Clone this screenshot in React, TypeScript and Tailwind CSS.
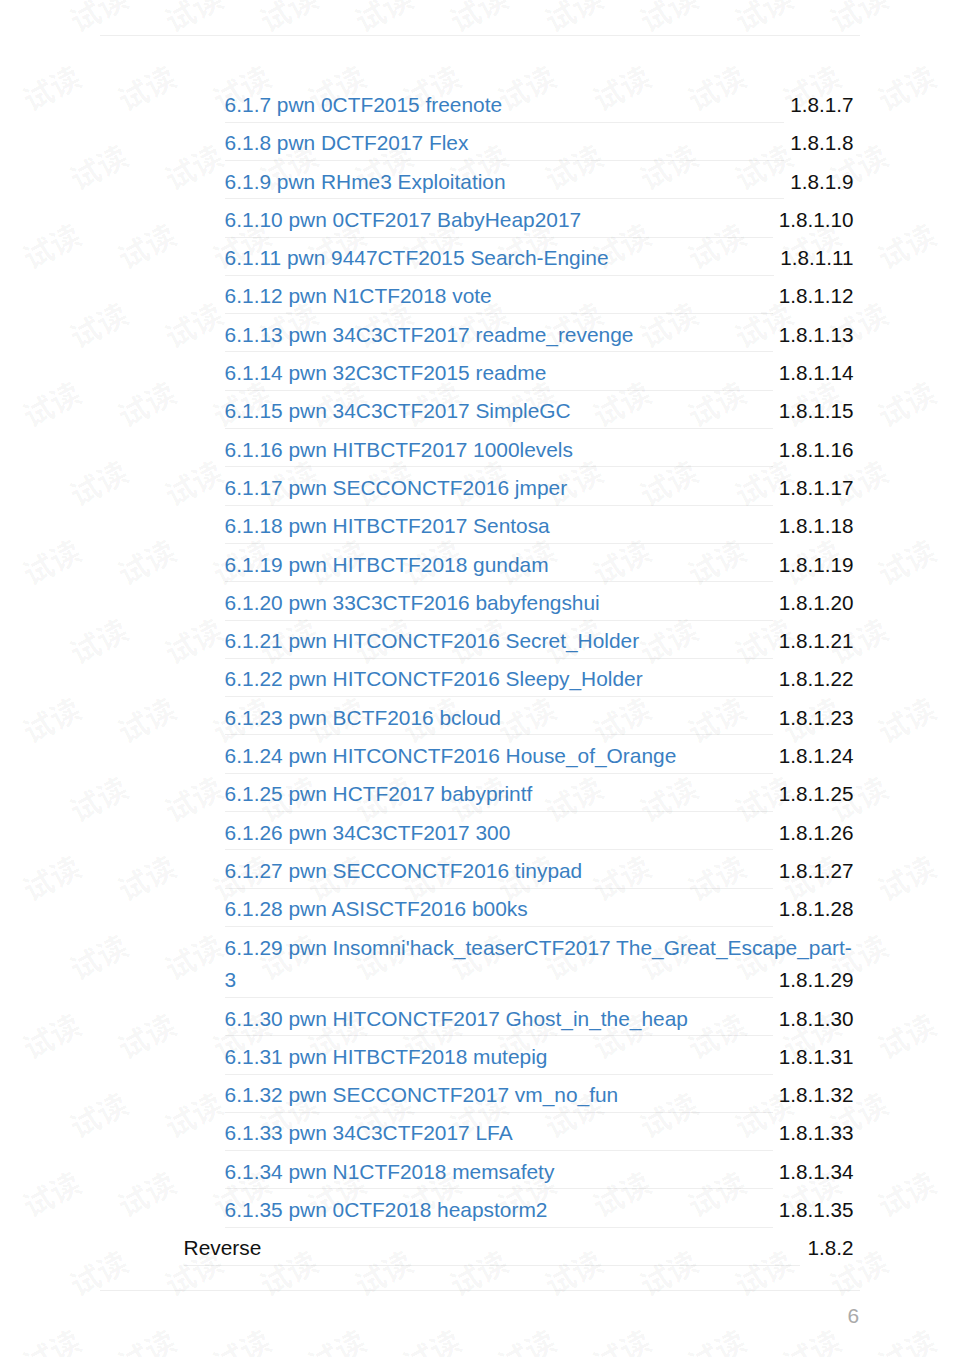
const entries: [string, string][] = [
  ["6.1.7 pwn 0CTF2015 freenote", "1.8.1.7"],
  ["6.1.8 pwn DCTF2017 Flex", "1.8.1.8"],
  ["6.1.9 pwn RHme3 Exploitation", "1.8.1.9"],
  ["6.1.10 pwn 0CTF2017 BabyHeap2017", "1.8.1.10"],
  ["6.1.11 pwn 9447CTF2015 Search-Engine", "1.8.1.11"],
  ["6.1.12 pwn N1CTF2018 vote", "1.8.1.12"],
  ["6.1.13 pwn 34C3CTF2017 readme_revenge", "1.8.1.13"],
  ["6.1.14 pwn 32C3CTF2015 readme", "1.8.1.14"],
  ["6.1.15 pwn 34C3CTF2017 SimpleGC", "1.8.1.15"],
  ["6.1.16 pwn HITBCTF2017 1000levels", "1.8.1.16"],
  ["6.1.17 pwn SECCONCTF2016 jmper", "1.8.1.17"],
  ["6.1.18 pwn HITBCTF2017 Sentosa", "1.8.1.18"],
  ["6.1.19 pwn HITBCTF2018 gundam", "1.8.1.19"],
  ["6.1.20 pwn 33C3CTF2016 babyfengshui", "1.8.1.20"],
  ["6.1.21 pwn HITCONCTF2016 Secret_Holder", "1.8.1.21"],
  ["6.1.22 pwn HITCONCTF2016 Sleepy_Holder", "1.8.1.22"],
  ["6.1.23 pwn BCTF2016 bcloud", "1.8.1.23"],
  ["6.1.24 pwn HITCONCTF2016 House_of_Orange", "1.8.1.24"],
  ["6.1.25 pwn HCTF2017 babyprintf", "1.8.1.25"],
  ["6.1.26 pwn 34C3CTF2017 300", "1.8.1.26"],
  ["6.1.27 pwn SECCONCTF2016 tinypad", "1.8.1.27"],
  ["6.1.28 pwn ASISCTF2016 b00ks", "1.8.1.28"],
];

const entriesAfter: [string, string][] = [
  ["6.1.30 pwn HITCONCTF2017 Ghost_in_the_heap", "1.8.1.30"],
  ["6.1.31 pwn HITBCTF2018 mutepig", "1.8.1.31"],
  ["6.1.32 pwn SECCONCTF2017 vm_no_fun", "1.8.1.32"],
  ["6.1.33 pwn 34C3CTF2017 LFA", "1.8.1.33"],
  ["6.1.34 pwn N1CTF2018 memsafety", "1.8.1.34"],
  ["6.1.35 pwn 0CTF2018 heapstorm2", "1.8.1.35"],
];

function Row({ title, page }: { title: string; page: string }) {
  return (
    <div className="flex pt-[4.6px]">
      <a className="flex-1 border-b border-[#eeeeee] text-[#3a7fc2] leading-[32.7px] whitespace-nowrap">{title}</a>
      <span className="pl-[6px] text-[20.7px] leading-[32.7px]">{page}</span>
    </div>
  );
}

// watermark rows alternate between two x offsets
function Watermark() {
  const marks: { x: number; y: number }[] = [];
  for (let r = 0; r < 18; r++) {
    const y = 8 + r * 79;
    const even = r % 2 === 0;
    const start = even ? 99 : 52;
    const count = even ? 9 : 10;
    for (let c = 0; c < count; c++) {
      marks.push({ x: start + c * 95, y });
    }
  }
  return (
    <div className="absolute inset-0 overflow-hidden pointer-events-none">
      {marks.map((m, i) => (
        <span
          key={i}
          className="absolute -translate-x-1/2 -translate-y-1/2 -rotate-[28deg] whitespace-nowrap text-[30px] font-bold leading-none font-['Noto_Sans_CJK_SC',sans-serif] text-black/[0.04]"
          style={{ left: m.x - 1, top: m.y }}
        >
          试读
        </span>
      ))}
    </div>
  );
}

export default function App() {
  return (
    <div className="relative h-[1357px] w-[960px] overflow-hidden bg-white font-['Liberation_Sans',Arial,sans-serif] text-[20.9px] text-[#111111]">
      <div className="mx-[100px] h-[36px] border-b border-[#eeeeee]" />

      <div className="ml-[183.6px] mr-[106.6px] mt-[48.4px]">
        <div className="ml-[41px]">
          {entries.map(([t, p]) => (
            <Row key={p} title={t} page={p} />
          ))}

          <div className="pt-[4.6px]">
            <a className="block text-[#3a7fc2] leading-[32.7px] whitespace-nowrap">
              6.1.29 pwn Insomni'hack_teaserCTF2017 The_Great_Escape_part-
            </a>
            <div className="flex">
              <a className="flex-1 border-b border-[#eeeeee] text-[#3a7fc2] leading-[32.7px]">3</a>
              <span className="pl-[6px] text-[20.7px] leading-[32.7px]">1.8.1.29</span>
            </div>
          </div>

          {entriesAfter.map(([t, p]) => (
            <Row key={p} title={t} page={p} />
          ))}
        </div>

        <div className="flex pt-[4.6px]">
          <span className="flex-1 border-b border-[#eeeeee] leading-[32.7px]">Reverse</span>
          <span className="pl-[7px] text-[20.7px] leading-[32.7px]">1.8.2</span>
        </div>
      </div>

      <div className="mx-[100px] mt-[24px] border-t border-[#eeeeee] pr-px pt-[10px] text-right leading-[30px] text-[#aaaaaa]">6</div>

      <Watermark />
    </div>
  );
}
